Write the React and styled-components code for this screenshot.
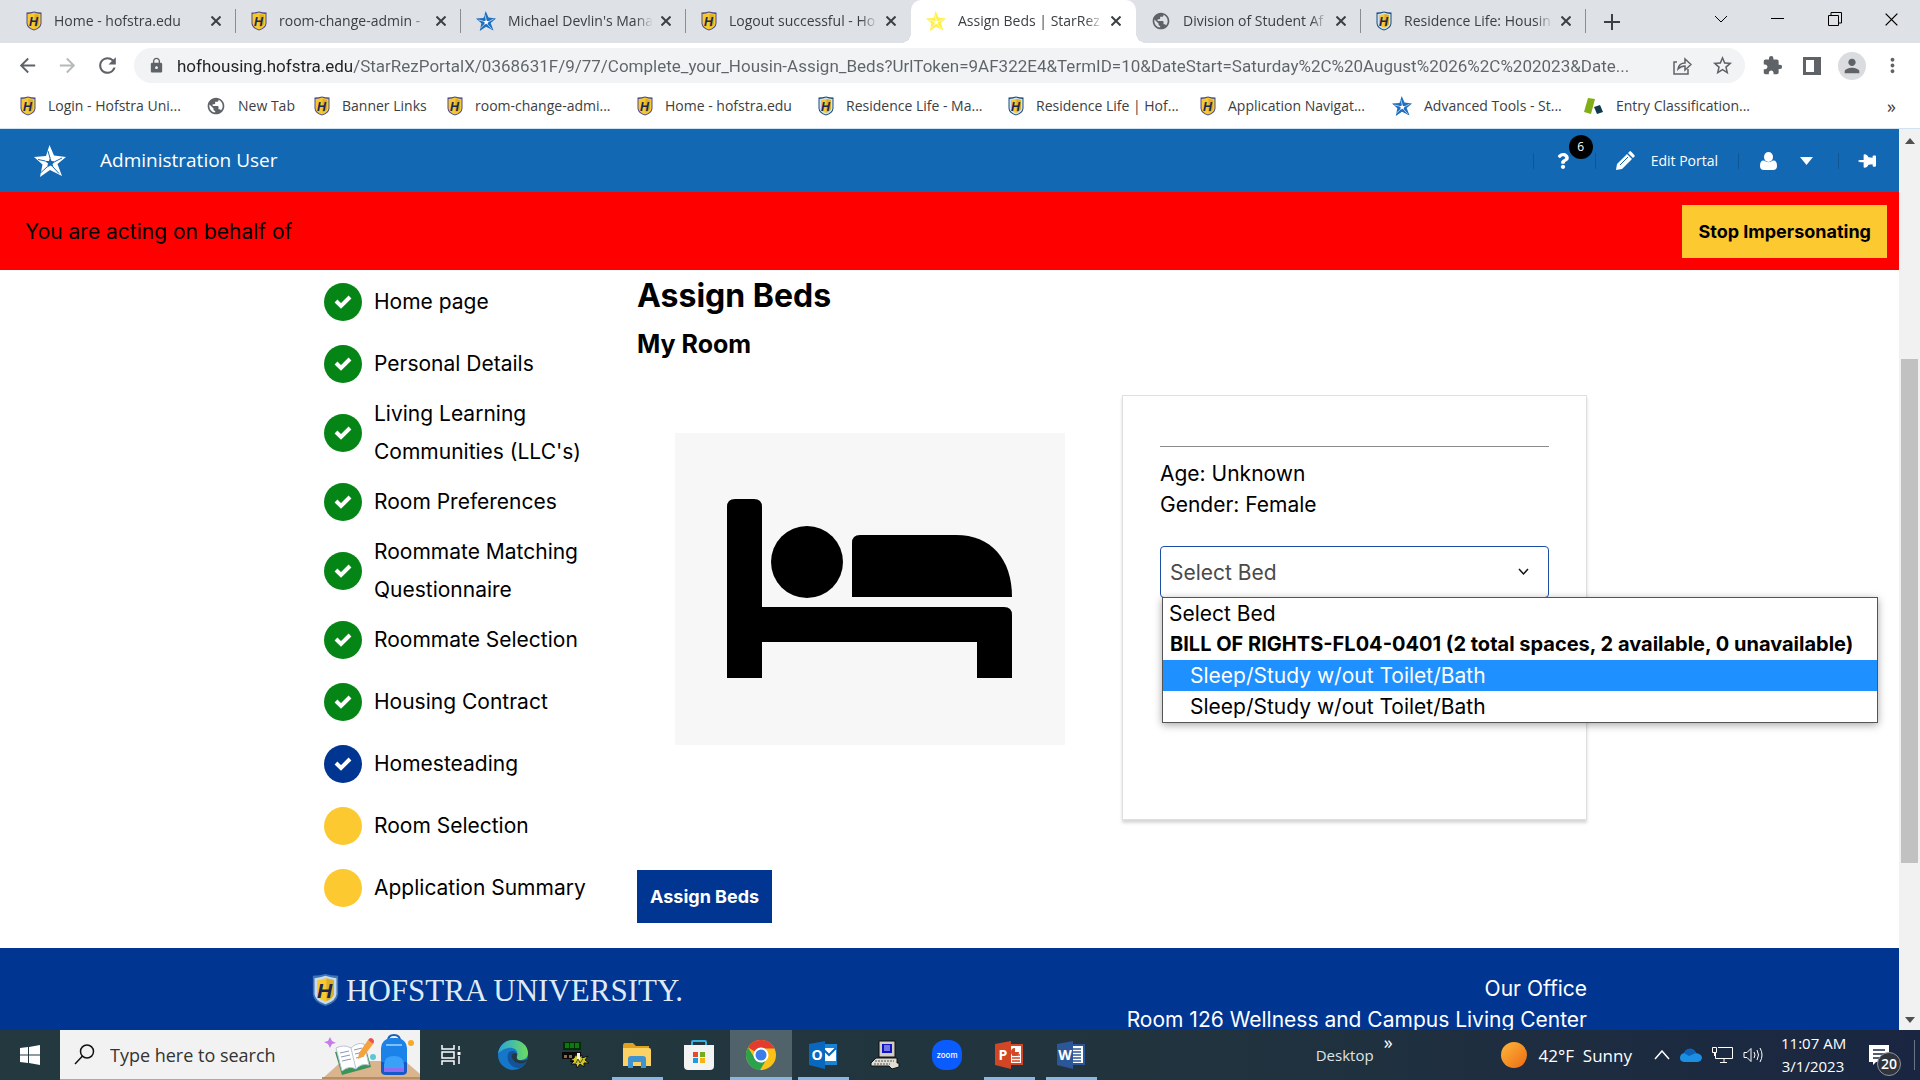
import { useState } from "react";
import styled, { createGlobalStyle, ThemeProvider } from "styled-components";
import {
  MdArrowBack,
  MdArrowForward,
  MdExtension,
  MdLock,
  MdMoreVert,
  MdPerson,
  MdPublic,
  MdRefresh,
  MdStarBorder,
} from "react-icons/md";
import { FaQuestion, FaThumbtack } from "react-icons/fa";

const theme = {
  colors: {
    blue: "#003591",
    header: "#1268b3",
    green: "#068517",
    yellow: "#fcc931",
    red: "#ff0000",
    strip: "#dee1e6",
    icon: "#5f6368",
    text: "#3c4043",
  },
  fonts: {
    page: '"Inter", sans-serif',
    chrome: '"Open Sans", sans-serif',
    url: '"Roboto", sans-serif',
    crest: '"Liberation Serif", serif',
  },
};

const GlobalStyle = createGlobalStyle`
  *, *::before, *::after {
    box-sizing: border-box;
  }
  body {
    margin: 0;
    background: #fff;
  }
  button {
    border: none;
    padding: 0;
    background: none;
    font: inherit;
    color: inherit;
    cursor: pointer;
  }
  a {
    color: inherit;
    text-decoration: none;
  }
  svg {
    display: block;
    flex: none;
  }
`;

const Screen = styled.div`
  display: flex;
  flex-direction: column;
  height: 100vh;
  overflow: hidden;
`;

/* ---------- browser ---------- */

const TabStrip = styled.div`
  display: flex;
  flex: none;
  justify-content: space-between;
  height: 43px;
  padding-left: 11px;
  background: ${({ theme }) => theme.colors.strip};
  font-family: ${({ theme }) => theme.fonts.chrome};
  font-size: 14px;
  color: ${({ theme }) => theme.colors.text};
`;

const Tabs = styled.div`
  display: grid;
  grid-template-columns: repeat(7, minmax(0, 225px)) 52px;
  flex: 1;
`;

const Tab = styled.div`
  position: relative;
  display: flex;
  align-items: center;
  gap: 8px;
  padding: 0 15px 2px;
  background: ${({ $active }) => ($active ? "#fff" : "transparent")};
  border-radius: 10px 10px 0 0;

  &::before,
  &::after {
    content: "";
    display: ${({ $active }) => ($active ? "block" : "none")};
    position: absolute;
    bottom: 0;
    width: 10px;
    height: 10px;
  }
  &::before {
    left: -10px;
    background: radial-gradient(circle at 0 0, transparent 10px, #fff 10px);
  }
  &::after {
    right: -10px;
    background: radial-gradient(circle at 100% 0, transparent 10px, #fff 10px);
  }
`;

const TabTitle = styled.button`
  display: flex;
  align-items: center;
  gap: 12px;
  flex: 1;
  min-width: 0;
  height: 100%;
`;

const TabText = styled.span`
  flex: 1;
  overflow: hidden;
  text-align: left;
  white-space: nowrap;
  mask-image: linear-gradient(to right, #000 88%, transparent);
`;

const TabDivider = styled.span`
  position: absolute;
  right: 0;
  width: 1px;
  height: 24px;
  background: #8a8d91;
`;

const NewTab = styled.button`
  display: flex;
  align-items: center;
  justify-content: center;
`;

const WindowButtons = styled.div`
  display: flex;
  height: 38px;

  button {
    display: flex;
    align-items: center;
    justify-content: center;
    width: 57px;
    color: #000;
  }
`;

const Toolbar = styled.div`
  display: flex;
  flex: none;
  align-items: center;
  gap: 12px;
  height: 45px;
  padding: 0 14px 0 13px;
  background: #fff;
  color: ${({ theme }) => theme.colors.icon};
`;

const ToolButton = styled.button`
  display: flex;
  align-items: center;
  justify-content: center;
  width: 28px;
  height: 28px;
  border-radius: 50%;
  background: ${({ $round }) => ($round ? "#dadce0" : "none")};
  opacity: ${({ $faded }) => ($faded ? 0.45 : 1)};
`;

const AddressBar = styled.div`
  display: flex;
  flex: 1;
  align-items: center;
  gap: 12px;
  height: 35px;
  margin: 0 1px;
  padding: 0 9px 0 14px;
  border-radius: 18px;
  background: #f1f3f4;
`;

// the host is darker than the path, so the text is filled from a gradient
const Address = styled.input`
  flex: 1;
  min-width: 0;
  padding: 0;
  border: none;
  outline: none;
  font-family: ${({ theme }) => theme.fonts.url};
  font-size: 17px;
  background: linear-gradient(to right, #202124 176px, #5f6368 176px);
  background-clip: text;
  -webkit-text-fill-color: transparent;
`;

const ToolIcons = styled.div`
  display: flex;
  gap: 12px;
`;

const Bookmarks = styled.nav`
  display: flex;
  flex: none;
  align-items: center;
  height: 41px;
  padding: 0 20px 5px;
  border-bottom: 1px solid #cfe3f3;
  background: #fff;
  font-family: ${({ theme }) => theme.fonts.chrome};
  font-size: 14px;
  color: ${({ theme }) => theme.colors.text};
`;

const Bookmark = styled.a`
  display: flex;
  align-items: center;
  gap: 12px;
  width: ${({ $width }) => $width}px;
  white-space: nowrap;
`;

const MoreBookmarks = styled.button`
  margin-left: auto;
  padding-right: 4px;
  font-size: 18px;
`;

const Viewport = styled.div`
  display: flex;
  flex: 1;
  min-height: 0;
`;

const Page = styled.div`
  flex: 1;
  min-width: 0;
  overflow: hidden;
  font-family: ${({ theme }) => theme.fonts.page};
  font-size: 21px;
  line-height: 31px;
  color: #000;
`;

const Scrollbar = styled.div`
  display: flex;
  flex-direction: column;
  align-items: center;
  justify-content: space-between;
  width: 21px;
  padding: 9px 0 7px;
  background: #f1f1f1;
`;

const ScrollTrack = styled.div`
  display: grid;
  grid-template-rows: 215fr 504fr 154fr;
  flex: 1;
  width: 17px;

  span {
    grid-row: 2;
    background: #c1c1c1;
  }
`;

/* ---------- portal ---------- */

const PortalBar = styled.header`
  display: flex;
  align-items: center;
  justify-content: space-between;
  height: 63px;
  padding: 0 23px 0 34px;
  background: ${({ theme }) => theme.colors.header};
  font-family: ${({ theme }) => theme.fonts.chrome};
  font-size: 14px;
  color: #fff;
`;

const Brand = styled.div`
  display: flex;
  align-items: center;
  gap: 34px;
  font-size: 19px;
`;

const PortalTools = styled.div`
  display: flex;
  align-items: center;
`;

const PortalTool = styled.button`
  position: relative;
  display: flex;
  align-items: center;
  gap: ${({ $gap }) => $gap || 16}px;
  height: 16px;
  padding: ${({ $pad }) => $pad || "0 20px"};
  border-left: 1px solid #0d5797;
`;

const Badge = styled.span`
  position: absolute;
  top: -18px;
  right: 2px;
  width: 24px;
  height: 24px;
  border-radius: 50%;
  background: #000;
  font-size: 12px;
  line-height: 24px;
  text-align: center;
`;

const ActingBar = styled.div`
  display: flex;
  align-items: center;
  justify-content: space-between;
  height: 78px;
  padding: 0 12px 0 25px;
  background: ${({ theme }) => theme.colors.red};
`;

const ActionButton = styled.button`
  height: 53px;
  padding: 0 ${({ $primary }) => ($primary ? 13 : 16)}px;
  background: ${({ theme, $primary }) =>
    $primary ? theme.colors.blue : theme.colors.yellow};
  font-size: 18px;
  font-weight: 700;
  color: ${({ $primary }) => ($primary ? "#fff" : "#000")};
`;

const Container = styled.div`
  display: flex;
  max-width: 1275px;
  margin: 0 auto;
`;

const Steps = styled.nav`
  flex: 0 0 325px;
  padding: 1px 0 0 12px;
`;

const Step = styled.a`
  display: flex;
  align-items: center;
  gap: 12px;
  min-height: 62px;
  max-width: 274px;
  line-height: 38px;
`;

const stepColors = { done: "green", current: "blue", todo: "yellow" };

const StepMark = styled.span`
  display: flex;
  flex: none;
  align-items: center;
  justify-content: center;
  width: 38px;
  height: 38px;
  border-radius: 50%;
  background: ${({ theme, $state }) => theme.colors[stepColors[$state]]};
`;

const Main = styled.main`
  flex: 1;
  height: 678px;
  display: flex;
  flex-direction: column;
  align-items: flex-start;
  padding-bottom: 25px;
`;

const Title = styled.h1`
  margin: 6px 0 8px;
  font-size: 32px;
  line-height: 40px;
`;

const Subtitle = styled.h2`
  margin: 4px 0 35px;
  font-size: 25px;
  line-height: 32px;
`;

const Room = styled.section`
  display: grid;
  grid-template-columns: 1fr 465px;
  align-self: stretch;
  margin-bottom: auto;
`;

const Picture = styled.div`
  display: flex;
  width: 390px;
  height: 312px;
  margin: 38px;
  background: #f7f7f7;
`;

const Card = styled.div`
  height: 425px;
  padding: 50px 37px 0;
  border: 1px solid #e0e0e0;
  box-shadow: 0 3px 3px rgba(0, 0, 0, 0.16);

  hr {
    height: 1px;
    margin: 0 0 11px;
    border: none;
    background: #8c8c8c;
  }
  p {
    margin: 0;
  }
`;

const BedField = styled.div`
  position: relative;
  margin-top: 26px;
`;

const BedSelect = styled.select`
  display: block;
  width: 100%;
  height: 52px;
  padding: 0 9px;
  border: 1px solid #1c4fa3;
  border-radius: 4px;
  outline: none;
  appearance: none;
  background: #fff;
  font: inherit;
  color: #4a4a4a;
`;

const SelectArrow = styled.svg`
  position: absolute;
  top: 21px;
  right: 20px;
  pointer-events: none;
`;

const BedMenu = styled.ul`
  position: absolute;
  top: 51px;
  left: 2px;
  width: 716px;
  margin: 0;
  padding: 0;
  border: 1px solid #555;
  background: #fff;
  box-shadow: 0 2px 8px rgba(0, 0, 0, 0.35);
  list-style: none;
  white-space: nowrap;
`;

const BedOption = styled.li`
  padding-left: ${({ $inset }) => ($inset ? 27 : 6)}px;
  background: ${({ $active }) => ($active ? "#1e90ff" : "#fff")};
  color: ${({ $active }) => ($active ? "#fff" : "#000")};
`;

const BedGroup = styled.li`
  padding-left: 7px;
  font-size: 20px;
  font-weight: 700;
`;

const Footer = styled.footer`
  padding-top: 25px;
  background: ${({ theme }) => theme.colors.blue};
  color: #fff;
`;

const FooterRow = styled(Container)`
  justify-content: space-between;
`;

const University = styled.a`
  display: flex;
  align-items: center;
  gap: 7px;
  height: 34px;
  font-family: ${({ theme }) => theme.fonts.crest};
  font-size: 31px;
  color: #dfeaf8;
`;

const Office = styled.address`
  font-style: normal;
  text-align: right;
`;

/* ---------- taskbar ---------- */

const Taskbar = styled.div`
  display: flex;
  flex: none;
  height: 50px;
  background: linear-gradient(to right, #24393f, #21343e 60%, #1a2641);
  font-family: ${({ theme }) => theme.fonts.chrome};
  color: #fff;
`;

const StartButton = styled.button`
  display: flex;
  align-items: center;
  justify-content: center;
  width: 60px;
`;

const SearchBox = styled.label`
  display: flex;
  align-items: center;
  gap: 15px;
  width: 360px;
  padding-left: 14px;
  border-bottom: 1px solid #aaa;
  background: #f2f2f2;

  input {
    flex: 1;
    min-width: 0;
    padding: 0;
    border: none;
    outline: none;
    background: none;
    font-family: inherit;
    font-size: 18px;
  }
  input::placeholder {
    color: #333;
  }
`;

const TaskButton = styled.button`
  display: flex;
  align-items: center;
  justify-content: center;
  width: 62px;
  padding-top: 3px;
  border-bottom: 3px solid transparent;
  background: ${({ $active }) => ($active ? "#51636a" : "none")};
  background-image: ${({ $open }) =>
    $open ? "linear-gradient(#83b9e2, #83b9e2)" : "none"};
  background-origin: border-box;
  background-repeat: no-repeat;
  background-position: bottom;
  background-size: ${({ $active }) => ($active ? "100%" : "51px")} 3px;
`;

const Tray = styled.div`
  display: flex;
  align-items: center;
  margin-left: auto;
  padding-right: 5px;
`;

const DesktopLabel = styled.button`
  display: flex;
  gap: 10px;
  margin-right: 108px;
  font-size: 15px;
  color: #dfe4e6;

  span {
    margin-top: -13px;
    font-size: 18px;
    line-height: 20px;
    color: #fff;
  }
`;

const Weather = styled.button`
  display: flex;
  align-items: center;
  gap: 12px;
  margin-right: 22px;
  font-size: 17px;
`;

const Sun = styled.span`
  width: 26px;
  height: 26px;
  border-radius: 50%;
  background: linear-gradient(135deg, #fcb83a, #ee6a14);
`;

const TrayIcons = styled.div`
  display: flex;
  align-items: center;
  gap: 10px;
  margin-right: 17px;
`;

const Clock = styled.button`
  width: 64px;
  margin-right: 24px;
  font-size: 15px;
  line-height: 23px;
  text-align: center;
  white-space: nowrap;
`;

const Notices = styled.button`
  position: relative;
  height: 30px;
  padding-right: 25px;
  border-right: 1px solid #6b7487;

  span {
    position: absolute;
    top: 12px;
    left: 8px;
    width: 24px;
    height: 24px;
    border: 1px solid #8d949e;
    border-radius: 50%;
    background: #30353d;
    font-size: 14px;
    font-weight: 600;
    line-height: 22px;
    text-align: center;
  }
`;

/* ---------- drawings ---------- */

function Shield({ width = 16, height = 20, edge = "#4d4a8e", trim = "#f6c92f" }) {
  return (
    <svg width={width} height={height} viewBox="0 0 32 40">
      <path d="M1 3Q9 3 16 1Q23 3 31 3V25Q30 35 16 39Q2 35 1 25Z" fill={edge} />
      <path d="M3 6Q10 5 16 3Q22 5 29 6V25Q28 33 16 37Q4 33 3 25Z" fill={trim} />
      <path d="M6 8Q11 8 16 6Q21 8 26 8V25Q25 30 16 34Q7 30 6 25Z" fill="#f6c92f" />
      <path d="M17 6L26 8V25Q25 30 17 33Z" fill="#dcae2b" />
      <text x="15" y="29" fontFamily="Liberation Sans" fontSize="25" fontWeight="700" fontStyle="italic" textAnchor="middle" fill="#1c2653">
        H
      </text>
    </svg>
  );
}

function Star({ size = 20, color = "#1f6fc0", hole = "#fff" }) {
  return (
    <svg width={size} height={size} viewBox="0 0 32 32">
      <path
        d="M15.500 0L20 10.500L32 12L23.500 19L28 31L16 25L6 32L8.500 19.500L0 12L12 11Z"
        fill={color}
      />
      <path d="M16 12L17.500 16L21.500 16.500L18.500 19L19.500 22.500L16.500 20.500L13 22.500L14 18.500L11 16L15 16Z" fill={hole} />
      <path d="M16 13L14 6M21 16.500L28 13M19 22L25 28.500M13 22L7 27.500M11.500 16L4 14.500" stroke={hole} strokeWidth="1" fill="none" />
    </svg>
  );
}

function EntryMark() {
  return (
    <svg width="20" height="20" viewBox="0 0 20 20">
      <path d="M4 2L11 3L7 18L0 16Z" fill="#7fae16" />
      <path d="M10 11L16 9L19 16L13 18Z" fill="#12384d" />
    </svg>
  );
}

function Favicon({ kind }) {
  if (kind === "star") return <Star />;
  if (kind === "yellowStar") return <Star color="#fff04a" />;
  if (kind === "globe") return <MdPublic size={20} color="#5f6368" />;
  if (kind === "entry") return <EntryMark />;
  if (kind === "blueShield") return <Shield edge="#1b4a7c" trim="#cfe3ee" />;
  return <Shield />;
}

function Cross({ size = 10, width = 2 }) {
  return (
    <svg width={size} height={size} viewBox="0 0 10 10" stroke="currentColor" strokeWidth={width}>
      <path d="M0.500 0.500L9.500 9.500M9.500 0.500L0.500 9.500" />
    </svg>
  );
}

function Check() {
  return (
    <svg width="18" height="14" viewBox="0 0 18 14">
      <path d="M2 6L7 11L16 2" fill="none" stroke="#fff" strokeWidth="4" />
    </svg>
  );
}

function Bed() {
  return (
    <svg width="390" height="312" viewBox="0 0 390 312">
      <path d="M52 245V74Q52 66 60 66H79Q87 66 87 74V174H329Q337 174 337 182V245H302V209H87V245Z" />
      <circle cx="132" cy="129" r="36" />
      <path d="M177 164V110Q177 102 185 102H281C316 102 337 126 337 164Z" />
    </svg>
  );
}

function SearchArt() {
  return (
    <svg width="100" height="49" viewBox="0 0 100 49">
      <path d="M2 49L22 31H85L100 44V49Z" fill="#d9b48c" />
      <path d="M2 47H100V49H2Z" fill="#b88d62" />
      <path d="M15 22L45 15L51 37L22 45Z" fill="#39945a" />
      <path d="M16 18Q24 14 31 18Q37 12 44 14L49 35Q41 33 36 39Q29 35 22 41Z" fill="#fff" stroke="#b9c4d4" />
      <path d="M20 23L29 21M21 27L30 25M22 31L31 29M34 20L42 18M35 24L43 22M36 28L44 26" stroke="#8c97b5" />
      <path d="M31 18L36 39" stroke="#b9c4d4" />
      <path d="M38 29L39 23L48 10L53 14L44 26Z" fill="#f6a13c" />
      <path d="M48 10L50 8Q54 8 54 12L53 14Z" fill="#e9524a" />
      <path d="M10 7L12 11L16 13L12 14L10 18L8 14L4 12L8 11Z" fill="#c77be8" />
      <circle cx="53" cy="27" r="3" fill="#5cc7d3" />
      <circle cx="91" cy="13" r="3" fill="#f7a928" />
      <path d="M68 11Q68 5 74 5Q80 5 80 11" fill="none" stroke="#1d5fb0" strokeWidth="2" />
      <rect x="61" y="8" width="26" height="37" rx="10" fill="#1b82ea" />
      <path d="M61 32V41Q61 45 66 45H82Q87 45 87 41V32Z" fill="#1359c7" />
      <path d="M64 35Q64 26 74 26Q84 26 84 35V40H64Z" fill="#3ba0f7" />
      <path d="M64 38H84V42H64Z" fill="#8f6cf0" />
      <path d="M66 15H82" stroke="#7cc0ff" strokeWidth="2" />
    </svg>
  );
}

function OfficeMark({ letter, color, dark, children }) {
  return (
    <svg width="30" height="30" viewBox="0 0 30 30">
      <rect x="14" y="4" width="15" height="21" fill={color} />
      {children}
      <path d="M1 4L17 1V29L1 25Z" fill={dark} />
      <text x="9" y="20" fontFamily="Open Sans" fontSize="14" fontWeight="700" textAnchor="middle" fill="#fff">
        {letter}
      </text>
    </svg>
  );
}

const taskIcons = {
  "Task View": (
    <svg width="20" height="20" viewBox="0 0 20 20" fill="none" stroke="#fff" strokeWidth="1.500">
      <path d="M1 0V4H13V0M1 20V16H13V20M1 7H13V13H1ZM18 1V5M18 11V19" />
      <path d="M18 7V10" strokeWidth="3" />
    </svg>
  ),
  Edge: (
    <svg width="30" height="30" viewBox="0 0 30 30">
      <defs>
        <linearGradient id="edgeTop" x1="0" x2="1">
          <stop offset="0" stopColor="#2aa3dd" />
          <stop offset="1" stopColor="#6bdc5e" />
        </linearGradient>
      </defs>
      <circle cx="15" cy="15" r="15" fill="#1677c8" />
      <path d="M0 14C1 5 8 0 15 0C24 0 30 6 30 13C30 18 26 20 22 20C18 20 18 18 19 16C21 10 15 7 10 8C5 9 1 12 0 14Z" fill="url(#edgeTop)" />
      <path d="M10 14C8 22 14 29 22 28C25 26 27 24 28 22C22 25 14 22 14 16C14 13 17 12 18 12C15 10 11 11 10 14Z" fill="#12539c" />
      <path d="M19 16C20 14 18 12 16 13C13 14 13 18 16 21C21 25 26 23 28 22L30 19C27 21 17 22 19 16Z" fill="#24383f" />
    </svg>
  ),
  Banner: (
    <svg width="30" height="30" viewBox="0 0 30 30">
      <path d="M3 2H21V10H3Z" fill="#032c03" />
      <path d="M5 3H9V8H5ZM10 3H14V8H10ZM15 3H19V8H15Z" fill="#0b7a12" />
      <path d="M2 12H21V22H10V19H2Z" fill="#090909" />
      <path d="M4 15H7V18H4ZM9 15H12V18H9Z" fill="#8a6a50" />
      <path d="M10 20L14 18L16 14L18 18L22 15L22 18L28 16L25 20L29 23L24 23L24 27L20 24L17 28L16 24L11 24L14 21Z" fill="#cfc92a" stroke="#111" />
      <path d="M17 13H20V20H17Z" fill="#eee" />
      <path d="M16 23L18 19L20 23L23 19" fill="none" stroke="#4d4a10" />
    </svg>
  ),
  Files: (
    <svg width="28" height="26" viewBox="0 0 28 26">
      <path d="M0 4Q0 1 2 1H10L13 4H26V12H0Z" fill="#e0a11c" />
      <path d="M0 6H26Q28 6 28 8V24H0Z" fill="#fcd264" />
      <path d="M5 26V17Q5 14 8 14H20Q23 14 23 17V26H18V20H10V26Z" fill="#3f93d1" />
    </svg>
  ),
  Store: (
    <svg width="30" height="30" viewBox="0 0 30 30">
      <path d="M8 6V2Q8 1 9 1H21Q22 1 22 2V6" fill="none" stroke="#36aee0" strokeWidth="2" />
      <path d="M0 5H30V26Q30 30 26 30H4Q0 30 0 26Z" fill="#f3f3f3" />
      <path d="M9 12H14V17H9Z" fill="#e64a2e" />
      <path d="M16 12H21V17H16Z" fill="#72ad1d" />
      <path d="M9 18H14V23H9Z" fill="#1c9be0" />
      <path d="M16 18H21V23H16Z" fill="#f7b316" />
    </svg>
  ),
  Chrome: (
    <svg width="30" height="30" viewBox="0 0 30 30">
      <circle cx="15" cy="15" r="15" fill="#fbc116" />
      <path d="M15 15L2 7.500A15 15 0 0 1 28 7.500L28 8.500H15Z" fill="#e33b2e" />
      <path d="M2 7.500A15 15 0 0 0 14 30L21 18.500L15 15L9 18.500Z" fill="#2ba24c" />
      <circle cx="15" cy="15" r="7.500" fill="#fff" />
      <circle cx="15" cy="15" r="5.500" fill="#3b7de9" />
    </svg>
  ),
  Outlook: (
    <OfficeMark letter="O" color="#1b84d2" dark="#0868bd">
      <path d="M16 8H28V21H16Z" fill="#fff" />
      <path d="M16 10L21 15L28 8" fill="none" stroke="#0868bd" strokeWidth="2" />
    </OfficeMark>
  ),
  Terminal: (
    <svg width="30" height="30" viewBox="0 0 30 30">
      <path d="M9 1H25V17H9Z" fill="#d0cdc4" stroke="#111" />
      <path d="M12 4H22V13H12Z" fill="#1013c4" />
      <path d="M14 6H20M14 8H20M14 10H20" stroke="#d7dbff" />
      <path d="M6 18H27V23H29V27L22 29L19 26H1V23Z" fill="#e0ddd4" stroke="#111" />
      <path d="M5 21H24M4 24H20" stroke="#555" strokeDasharray="2 1" />
    </svg>
  ),
  Zoom: (
    <svg width="30" height="30" viewBox="0 0 30 30">
      <rect width="30" height="30" rx="13" fill="#0b5cff" />
      <text x="15" y="18" fontFamily="Inter" fontSize="8" fontWeight="500" textAnchor="middle" fill="#fff">
        zoom
      </text>
    </svg>
  ),
  PowerPoint: (
    <OfficeMark letter="P" color="#d24726" dark="#d24625">
      <path d="M16 6H27V23H16Z" fill="#fff" />
      <path d="M18 15H26M18 18H26M18 21H26" stroke="#d24726" strokeWidth="1.500" />
      <path d="M21 8A4 4 0 1 0 25 12H21Z" fill="#d24726" />
    </OfficeMark>
  ),
  Word: (
    <OfficeMark letter="W" color="#2b579a" dark="#2b579a">
      <path d="M16 6H27V23H16Z" fill="#fff" />
      <path d="M17 9H25M17 12H25M17 15H25M17 18H25M17 21H25" stroke="#2b579a" strokeWidth="1.500" />
    </OfficeMark>
  ),
};

/* ---------- data ---------- */

const url =
  "hofhousing.hofstra.edu/StarRezPortalX/0368631F/9/77/Complete_your_Housin-Assign_Beds?UrlToken=9AF322E4&TermID=10&DateStart=Saturday%2C%20August%2026%2C%202023&Date...";

const tabs = [
  { icon: "shield", title: "Home - hofstra.edu" },
  { icon: "shield", title: "room-change-admin -" },
  { icon: "star", title: "Michael Devlin's Mana" },
  { icon: "shield", title: "Logout successful - Ho" },
  { icon: "yellowStar", title: "Assign Beds | StarRez" },
  { icon: "globe", title: "Division of Student Af" },
  { icon: "blueShield", title: "Residence Life: Housin" },
];

const activeTab = 4;

const bookmarks = [
  { icon: "shield", title: "Login - Hofstra Uni...", width: 186 },
  { icon: "globe", title: "New Tab", width: 108 },
  { icon: "shield", title: "Banner Links", width: 133 },
  { icon: "shield", title: "room-change-admi...", width: 190 },
  { icon: "shield", title: "Home - hofstra.edu", width: 181 },
  { icon: "blueShield", title: "Residence Life - Ma...", width: 190 },
  { icon: "blueShield", title: "Residence Life | Hof...", width: 192 },
  { icon: "shield", title: "Application Navigat...", width: 192 },
  { icon: "star", title: "Advanced Tools - St...", width: 192 },
  { icon: "entry", title: "Entry Classification...", width: 180 },
];

const steps = [
  { label: "Home page", state: "done" },
  { label: "Personal Details", state: "done" },
  { label: "Living Learning Communities (LLC's)", state: "done" },
  { label: "Room Preferences", state: "done" },
  { label: "Roommate Matching Questionnaire", state: "done" },
  { label: "Roommate Selection", state: "done" },
  { label: "Housing Contract", state: "done" },
  { label: "Homesteading", state: "current" },
  { label: "Room Selection", state: "todo" },
  { label: "Application Summary", state: "todo" },
];

const running = ["Files", "Chrome", "Outlook", "PowerPoint", "Word"];

/* ---------- sections ---------- */

function Browser({ children }) {
  return (
    <>
      <TabStrip>
        <Tabs>
          {tabs.map(({ icon, title }, i) => (
            <Tab key={title} $active={i === activeTab}>
              <TabTitle>
                <Favicon kind={icon} />
                <TabText>{title}</TabText>
              </TabTitle>
              <button aria-label={`Close ${title}`}>
                <Cross />
              </button>
              {i !== activeTab && i + 1 !== activeTab && <TabDivider />}
            </Tab>
          ))}
          <NewTab aria-label="New tab">
            <svg width="16" height="16" viewBox="0 0 16 16" stroke="#3c4043" strokeWidth="2">
              <path d="M8 0V16M0 8H16" />
            </svg>
          </NewTab>
        </Tabs>
        <WindowButtons>
          <button aria-label="Search tabs">
            <svg width="14" height="8" viewBox="0 0 14 8" fill="none" stroke="#000">
              <path d="M1 1L7 7L13 1" />
            </svg>
          </button>
          <button aria-label="Minimize">
            <svg width="13" height="2" viewBox="0 0 13 2">
              <path d="M0 0H13V1H0Z" />
            </svg>
          </button>
          <button aria-label="Restore">
            <svg width="14" height="14" viewBox="0 0 14 14" fill="none" stroke="#000">
              <path d="M0.500 3.500H10.500V13.500H0.500ZM3 3.500V0.500H13.500V11H10.500" />
            </svg>
          </button>
          <button aria-label="Close">
            <Cross size={13} width={1} />
          </button>
        </WindowButtons>
      </TabStrip>
      <Toolbar>
        <ToolButton aria-label="Back">
          <MdArrowBack size={23} />
        </ToolButton>
        <ToolButton aria-label="Forward" $faded>
          <MdArrowForward size={23} />
        </ToolButton>
        <ToolButton aria-label="Reload">
          <MdRefresh size={25} />
        </ToolButton>
        <AddressBar>
          <MdLock size={17} />
          <Address aria-label="Address" value={url} readOnly />
          <ToolIcons>
            <ToolButton aria-label="Share">
              <svg width="19" height="18" viewBox="0 0 19 18" fill="none" stroke="currentColor" strokeWidth="1.500">
                <path d="M4 5H1V17H15V12M5 12Q6 6 12 6V2L18 7.500L12 13V9Q8 9 5 12Z" />
              </svg>
            </ToolButton>
            <ToolButton aria-label="Bookmark">
              <MdStarBorder size={23} />
            </ToolButton>
          </ToolIcons>
        </AddressBar>
        <ToolIcons>
          <ToolButton aria-label="Extensions">
            <MdExtension size={21} />
          </ToolButton>
          <ToolButton aria-label="Side panel">
            <svg width="18" height="18" viewBox="0 0 18 18">
              <path d="M0 0H18V18H0ZM3 3V15H11V3Z" fill="currentColor" fillRule="evenodd" />
            </svg>
          </ToolButton>
          <ToolButton aria-label="Profile" $round>
            <MdPerson size={22} />
          </ToolButton>
          <ToolButton aria-label="Menu">
            <MdMoreVert size={23} />
          </ToolButton>
        </ToolIcons>
      </Toolbar>
      <Bookmarks>
        {bookmarks.map(({ icon, title, width }) => (
          <Bookmark key={title} href="#" $width={width}>
            <Favicon kind={icon} />
            {title}
          </Bookmark>
        ))}
        <MoreBookmarks aria-label="More bookmarks">»</MoreBookmarks>
      </Bookmarks>
      <Viewport>
        <Page>{children}</Page>
        <Scrollbar>
          <svg width="10" height="6" viewBox="0 0 10 6" fill="#505050">
            <path d="M5 0L10 6H0Z" />
          </svg>
          <ScrollTrack>
            <span />
          </ScrollTrack>
          <svg width="10" height="6" viewBox="0 0 10 6" fill="#505050">
            <path d="M5 6L10 0H0Z" />
          </svg>
        </Scrollbar>
      </Viewport>
    </>
  );
}

function PortalHeader() {
  return (
    <PortalBar>
      <Brand>
        <Star size={32} color="#fff" hole={theme.colors.header} />
        Administration User
      </Brand>
      <PortalTools>
        <PortalTool $pad="0 24px 0 21px" aria-label="Help">
          <FaQuestion size={16} />
          <Badge>6</Badge>
        </PortalTool>
        <PortalTool>
          <svg width="19" height="19" viewBox="0 0 19 19" fill="#fff">
            <path d="M0 19L1 13L11 3L16 8L6 18ZM12 2L14 0Q15 0 19 5L17 7Z" />
            <path d="M4 14L12 6" stroke="#1268b3" />
          </svg>
          Edit Portal
        </PortalTool>
        <PortalTool $gap={23} $pad="0 25px 0 21px" aria-label="Account">
          <svg width="17" height="18" viewBox="0 0 17 18" fill="#fff">
            <ellipse cx="8.500" cy="5" rx="4.500" ry="5" />
            <path d="M0 14Q0 8 4 8.500Q8.500 12 13 8.500Q17 8 17 14Q17 18 13 18H4Q0 18 0 14Z" />
          </svg>
          <svg width="13" height="8" viewBox="0 0 13 8" fill="#fff">
            <path d="M0 0H13L6.500 8Z" />
          </svg>
        </PortalTool>
        <PortalTool $pad="0 0 0 19px" aria-label="Pin">
          <FaThumbtack size={18} transform="rotate(90)" />
        </PortalTool>
      </PortalTools>
    </PortalBar>
  );
}

function AssignBeds() {
  const [bed, setBed] = useState("");

  return (
    <Main>
      <Title>Assign Beds</Title>
      <Subtitle>My Room</Subtitle>
      <Room>
        <Picture>
          <Bed />
        </Picture>
        <Card>
          <hr />
          <p>Age: Unknown</p>
          <p>Gender: Female</p>
          <BedField>
            <BedSelect aria-label="Select Bed" value={bed} onChange={(e) => setBed(e.target.value)}>
              <option value="">Select Bed</option>
              <option value="1">Sleep/Study w/out Toilet/Bath</option>
              <option value="2">Sleep/Study w/out Toilet/Bath</option>
            </BedSelect>
            <SelectArrow width="11" height="9" viewBox="0 0 11 9" fill="none" stroke="#111" strokeWidth="1.500">
              <path d="M1 2L5.500 7L10 2" />
            </SelectArrow>
            <BedMenu role="listbox" aria-label="Beds">
              <BedOption role="option">Select Bed</BedOption>
              <BedGroup>
                BILL OF RIGHTS-FL04-0401 (2 total spaces, 2 available, 0 unavailable)
              </BedGroup>
              <BedOption role="option" aria-selected $inset $active>
                Sleep/Study w/out Toilet/Bath
              </BedOption>
              <BedOption role="option" $inset>
                Sleep/Study w/out Toilet/Bath
              </BedOption>
            </BedMenu>
          </BedField>
        </Card>
      </Room>
      <ActionButton $primary>Assign Beds</ActionButton>
    </Main>
  );
}

function WindowsTaskbar() {
  return (
    <Taskbar>
      <StartButton aria-label="Start">
        <svg width="20" height="20" viewBox="0 0 20 20" fill="#fff">
          <path d="M0 3L8 2V9.500H0ZM9 2L20 0V9.500H9ZM0 10.500H8V18L0 17ZM9 10.500H20V20L9 18Z" />
        </svg>
      </StartButton>
      <SearchBox>
        <svg width="21" height="21" viewBox="0 0 21 21" fill="none" stroke="#111" strokeWidth="1.500">
          <circle cx="13" cy="7.500" r="6.500" />
          <path d="M8.500 12L1 20" />
        </svg>
        <input type="text" placeholder="Type here to search" />
        <SearchArt />
      </SearchBox>
      {Object.entries(taskIcons).map(([name, icon]) => (
        <TaskButton
          key={name}
          aria-label={name}
          $open={running.includes(name)}
          $active={name === "Chrome"}
        >
          {icon}
        </TaskButton>
      ))}
      <Tray>
        <DesktopLabel>
          Desktop <span>»</span>
        </DesktopLabel>
        <Weather>
          <Sun />
          42°F&nbsp; Sunny
        </Weather>
        <TrayIcons>
          <svg width="16" height="10" viewBox="0 0 16 10" fill="none" stroke="#fff" strokeWidth="1.500">
            <path d="M1 9L8 1L15 9" />
          </svg>
          <svg width="22" height="14" viewBox="0 0 22 14">
            <path d="M5 14Q0 14 0 10Q0 6 4 5Q7 0 12 1Q15 2 16 5Q22 6 22 10Q21 14 17 14Z" fill="#1b8fe3" />
            <path d="M4 5Q7 0 12 1Q15 2 16 5L9 8Z" fill="#0d62b8" />
          </svg>
          <svg width="21" height="18" viewBox="0 0 21 18" fill="none" stroke="#fff">
            <path d="M6 1.500H20.500V12.500H3.500V7M12 12V16M8 16.500H15M0.500 1.500H4.500V6.500H0.500ZM2.500 7V10" />
          </svg>
          <svg width="21" height="18" viewBox="0 0 21 18" fill="none" stroke="#fff">
            <path d="M1 6.500H4L8 2.500V15.500L4 11.500H1ZM11 6Q13 9 11 12M14 4Q17 9 14 14M17 2Q21 9 17 16" />
          </svg>
        </TrayIcons>
        <Clock>
          11:07 AM
          <br />
          3/1/2023
        </Clock>
        <Notices aria-label="Notifications">
          <svg width="20" height="20" viewBox="0 0 20 20">
            <path d="M0 0H20V17H7L4 20V17H0Z" fill="#fff" />
            <path d="M4 5H16M4 9H16M4 13H12" stroke="#1b2740" strokeWidth="1.500" />
          </svg>
          <span>20</span>
        </Notices>
      </Tray>
    </Taskbar>
  );
}

function App() {
  return (
    <ThemeProvider theme={theme}>
      <GlobalStyle />
      <Screen>
        <Browser>
          <PortalHeader />
          <ActingBar>
            You are acting on behalf of
            <ActionButton>Stop Impersonating</ActionButton>
          </ActingBar>
          <Container>
            <Steps>
              {steps.map(({ label, state }) => (
                <Step key={label} href="#">
                  <StepMark $state={state}>{state !== "todo" && <Check />}</StepMark>
                  {label}
                </Step>
              ))}
            </Steps>
            <AssignBeds />
          </Container>
          <Footer>
            <FooterRow>
              <University href="#">
                <Shield width={27} height={34} edge="#3f74b5" trim="#c9dcef" />
                HOFSTRA UNIVERSITY.
              </University>
              <Office>
                Our Office
                <br />
                Room 126 Wellness and Campus Living Center
              </Office>
            </FooterRow>
          </Footer>
        </Browser>
        <WindowsTaskbar />
      </Screen>
    </ThemeProvider>
  );
}

export default App;
